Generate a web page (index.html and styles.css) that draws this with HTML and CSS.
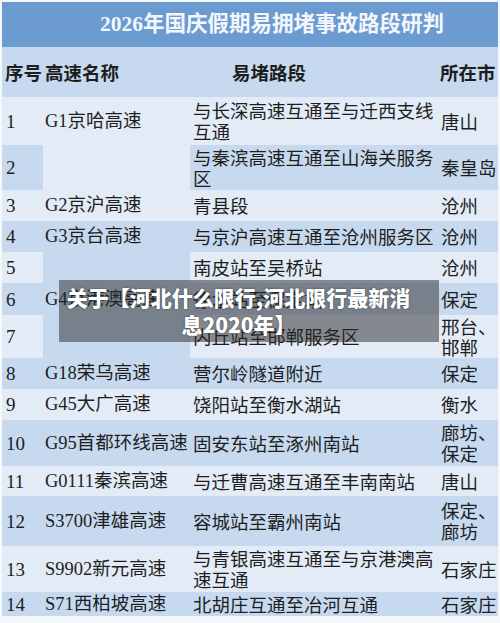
FILE: index.html
```html
<!DOCTYPE html>
<html lang="zh-CN">
<head>
<meta charset="utf-8">
<title>2026年国庆假期易拥堵事故路段研判</title>
<link rel="stylesheet" href="styles.css">
</head>
<body>
<div class="page">
  <div class="title">2026年国庆假期易拥堵事故路段研判</div>
  <table class="grid">
    <colgroup>
      <col class="c-no">
      <col class="c-name">
      <col class="c-road">
      <col class="c-city">
    </colgroup>
    <thead>
      <tr class="head">
        <th class="no-h">序号</th>
        <th class="name-h">高速名称</th>
        <th class="road-h">易堵路段</th>
        <th class="city-h">所在市</th>
      </tr>
    </thead>
    <tbody>
      <tr class="lt h48">
        <td class="no">1</td>
        <td class="name">G1京哈高速</td>
        <td class="road">与长深高速互通至与迁西支线<br>互通</td>
        <td class="city">唐山</td>
      </tr>
      <tr class="dk h45">
        <td class="no">2</td>
        <td class="name name-lt"></td>
        <td class="road">与秦滨高速互通至山海关服务<br>区</td>
        <td class="city">秦皇岛</td>
      </tr>
      <tr class="lt h31">
        <td class="no">3</td>
        <td class="name">G2京沪高速</td>
        <td class="road">青县段</td>
        <td class="city">沧州</td>
      </tr>
      <tr class="dk h31">
        <td class="no">4</td>
        <td class="name">G3京台高速</td>
        <td class="road">与京沪高速互通至沧州服务区</td>
        <td class="city">沧州</td>
      </tr>
      <tr class="lt h31">
        <td class="no">5</td>
        <td class="name name-dk"></td>
        <td class="road">南皮站至吴桥站</td>
        <td class="city">沧州</td>
      </tr>
      <tr class="dk h32">
        <td class="no">6</td>
        <td class="name name-dk">G4京港澳高速</td>
        <td class="road">徐水站至保定站</td>
        <td class="city">保定</td>
      </tr>
      <tr class="lt h43">
        <td class="no">7</td>
        <td class="name name-dk"></td>
        <td class="road">内丘站至邯郸服务区</td>
        <td class="city">邢台、<br>邯郸</td>
      </tr>
      <tr class="dk h31">
        <td class="no">8</td>
        <td class="name">G18荣乌高速</td>
        <td class="road">营尔岭隧道附近</td>
        <td class="city">保定</td>
      </tr>
      <tr class="lt h31">
        <td class="no">9</td>
        <td class="name">G45大广高速</td>
        <td class="road">饶阳站至衡水湖站</td>
        <td class="city">衡水</td>
      </tr>
      <tr class="dk h46">
        <td class="no">10</td>
        <td class="name">G95首都环线高速</td>
        <td class="road">固安东站至涿州南站</td>
        <td class="city">廊坊、<br>保定</td>
      </tr>
      <tr class="lt h30">
        <td class="no">11</td>
        <td class="name">G0111秦滨高速</td>
        <td class="road">与迁曹高速互通至丰南南站</td>
        <td class="city">唐山</td>
      </tr>
      <tr class="dk h50">
        <td class="no">12</td>
        <td class="name">S3700津雄高速</td>
        <td class="road">容城站至霸州南站</td>
        <td class="city">保定、<br>廊坊</td>
      </tr>
      <tr class="lt h46">
        <td class="no">13</td>
        <td class="name">S9902新元高速</td>
        <td class="road">与青银高速互通至与京港澳高<br>速互通</td>
        <td class="city">石家庄</td>
      </tr>
      <tr class="dk h24">
        <td class="no">14</td>
        <td class="name">S71西柏坡高速</td>
        <td class="road">北胡庄互通至冶河互通</td>
        <td class="city">石家庄</td>
      </tr>
    </tbody>
  </table>
  <div class="caption">关于【河北什么限行,河北限行最新消<br>息2020年】</div>
</div>
</body>
</html>
```

FILE: styles.css
```css
html, body {
  margin: 0;
  padding: 0;
  background: #ffffff;
}

.page {
  position: relative;
  width: 500px;
  height: 623px;
  padding: 2px 2px 0 2px;
  box-sizing: border-box;
  background: #f4f7fb;
  overflow: hidden;
}

.title {
  height: 45px;
  line-height: 45px;
  background: #6c9bd2;
  color: #f3f7fc;
  font-family: "Liberation Serif", "Noto Sans CJK SC", serif;
  font-weight: bold;
  font-size: 21.5px;
  padding-left: 98px;
  white-space: nowrap;
}

.grid {
  width: 496px;
  table-layout: fixed;
  border-collapse: collapse;
  border-spacing: 0;
  color: #1e1e1e;
  font-family: "Noto Sans CJK SC", sans-serif;
  font-size: 18.5px;
  line-height: 21px;
}

.c-no { width: 41px; }
.c-name { width: 147px; }
.c-road { width: 247px; }
.c-city { width: 61px; }

.grid th, .grid td {
  padding: 0;
  vertical-align: middle;
  text-align: left;
  white-space: nowrap;
}

.head {
  height: 50px;
  background: #c6d9ef;
}

.grid th {
  font-weight: bold;
  font-size: 18.5px;
}

.grid .no-h { padding-left: 3px; }
.grid .name-h { padding-left: 2px; }
.grid .road-h { padding-left: 42px; }
.grid .city-h { padding-left: 3px; }

.lt { background: #e2ebf6; }
.dk { background: #c6d9ef; }

.grid td.name-lt { background: #e2ebf6; }
.grid td.name-dk { background: #c6d9ef; }

.grid td.no {
  font-family: "Liberation Serif", serif;
  font-size: 19px;
  padding-left: 4px;
}

.grid td.name {
  font-family: "Liberation Serif", "Noto Sans CJK SC", serif;
  padding-left: 2px;
}

.grid td.road {
  padding-left: 3px;
}

.grid td.city {
  padding-left: 4px;
}

.h24 { height: 24px; }
.h30 { height: 30px; }
.h31 { height: 31px; }
.h32 { height: 32px; }
.h43 { height: 43px; }
.h45 { height: 45px; }
.h46 { height: 46px; }
.h48 { height: 48px; }
.h50 { height: 50px; }

.caption {
  position: absolute;
  left: 59px;
  top: 280px;
  width: 380px;
  height: 62px;
  box-sizing: border-box;
  padding: 4px 21px 0 0;
  background: rgba(40, 40, 40, 0.5);
  color: #ffffff;
  font-family: "Noto Sans CJK SC", sans-serif;
  font-weight: 900;
  font-size: 21px;
  line-height: 27px;
  text-align: center;
  white-space: nowrap;
  text-shadow: 0 0 2px rgba(0, 0, 0, 0.55);
}
```
